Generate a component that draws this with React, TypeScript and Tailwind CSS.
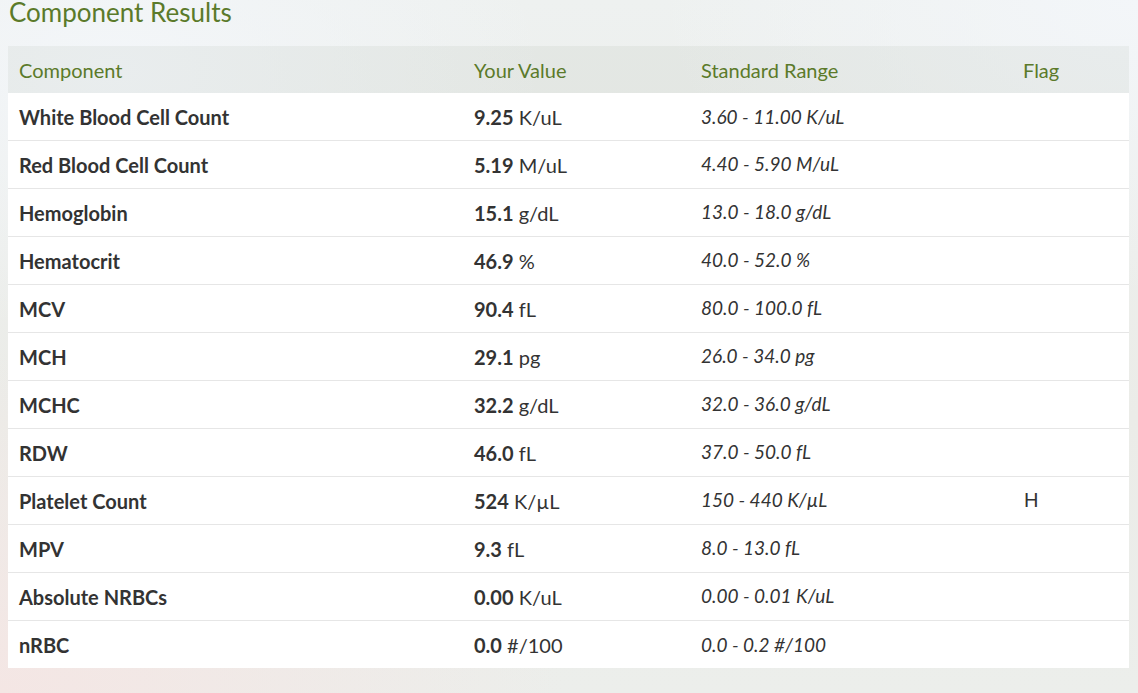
const rows = [
  {name: 'White Blood Cell Count', value: '9.25', unit: 'K/uL', range: '3.60 - 11.00 K/uL', flag: ''},
  {name: 'Red Blood Cell Count', value: '5.19', unit: 'M/uL', range: '4.40 - 5.90 M/uL', flag: ''},
  {name: 'Hemoglobin', value: '15.1', unit: 'g/dL', range: '13.0 - 18.0 g/dL', flag: ''},
  {name: 'Hematocrit', value: '46.9', unit: '%', range: '40.0 - 52.0 %', flag: ''},
  {name: 'MCV', value: '90.4', unit: 'fL', range: '80.0 - 100.0 fL', flag: ''},
  {name: 'MCH', value: '29.1', unit: 'pg', range: '26.0 - 34.0 pg', flag: ''},
  {name: 'MCHC', value: '32.2', unit: 'g/dL', range: '32.0 - 36.0 g/dL', flag: ''},
  {name: 'RDW', value: '46.0', unit: 'fL', range: '37.0 - 50.0 fL', flag: ''},
  {name: 'Platelet Count', value: '524', unit: 'K/µL', range: '150 - 440 K/µL', flag: 'H'},
  {name: 'MPV', value: '9.3', unit: 'fL', range: '8.0 - 13.0 fL', flag: ''},
  {name: 'Absolute NRBCs', value: '0.00', unit: 'K/uL', range: '0.00 - 0.01 K/uL', flag: ''},
  {name: 'nRBC', value: '0.0', unit: '#/100', range: '0.0 - 0.2 #/100', flag: ''},
]

export default function App() {
  return (
    <div
      className="w-[1138px] h-[693px] overflow-hidden text-[#333] bg-[linear-gradient(180deg,#eef1f0_0%,#ebece8_60%,#eceeeb_100%)] relative"
      style={{fontFamily: 'Lato, "Open Sans", sans-serif'}}
    >
      <div className="absolute inset-0 bg-[radial-gradient(ellipse_at_0%_100%,#f4e6e4_0%,transparent_35%),radial-gradient(ellipse_at_100%_0%,#f3f6f9_0%,transparent_30%),radial-gradient(ellipse_at_10%_10%,#f3f6f9_0%,transparent_30%)]" />
      <div className="relative pl-2 pr-[9px]">
        <h2 className="text-[26px] leading-[24px] text-[#5b7a2a] pl-[1px] h-[46px]">Component Results</h2>
        <table className="w-full border-collapse text-[20px]">
          <colgroup>
            <col className="w-[455px]" />
            <col className="w-[227px]" />
            <col className="w-[322px]" />
            <col />
          </colgroup>
          <thead>
            <tr className="bg-[rgba(60,80,40,0.05)] h-[47px] text-[#5b7a2a]">
              <th className="text-left font-normal pl-[11px]">Component</th>
              <th className="text-left font-normal pl-[11px]">Your Value</th>
              <th className="text-left font-normal pl-[11px]">Standard Range</th>
              <th className="text-left font-normal pl-[11px]">Flag</th>
            </tr>
          </thead>
          <tbody className="bg-white">
            {rows.map((r, i) => (
              <tr key={r.name} className={i > 0 ? 'h-[48px] border-t border-[#e6e6e6]' : 'h-[47px]'}>
                <td className="pl-[11px] pt-[1px] font-bold text-[#333]">{r.name}</td>
                <td className="pl-[11px] pt-[1px]">
                  <span className="font-bold">{r.value}</span> <span>{r.unit}</span>
                </td>
                <td className="pl-[11px] pt-[1px] italic text-[19px]">{r.range}</td>
                <td className="pl-[12px] text-[20px]" style={{fontFamily: '"Liberation Sans", Arial, sans-serif'}}>{r.flag}</td>
              </tr>
            ))}
          </tbody>
        </table>
      </div>
    </div>
  )
}
